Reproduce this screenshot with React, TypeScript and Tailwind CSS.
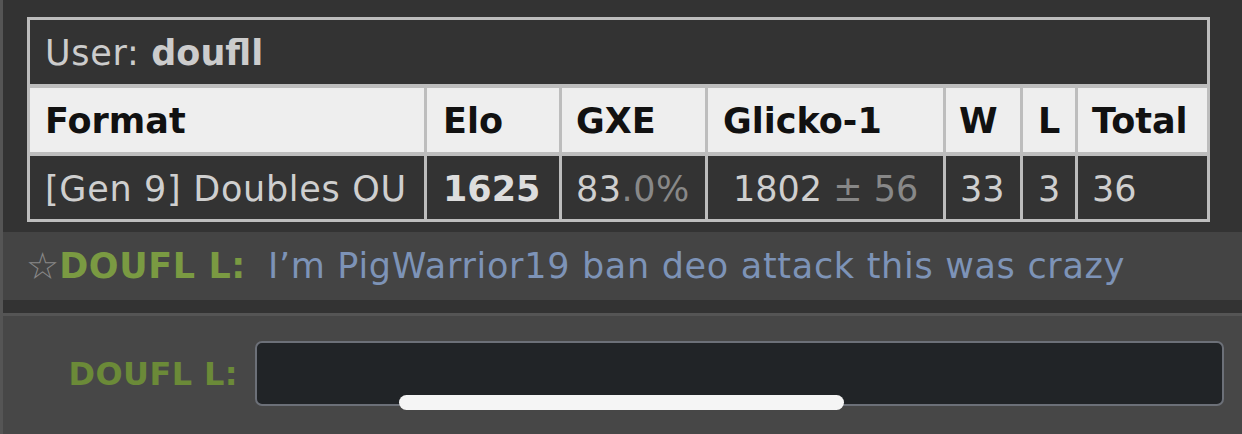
import React from "react";

const cols = "grid-cols-[394px_132px_143px_235px_74px_52px_129px]";

export default function App() {
  return (
    <div
      className="relative w-[1242px] h-[434px] overflow-hidden bg-[#333333] flex flex-col border-l-[3px] border-[#555555] text-[35px] leading-none"
      style={{ fontFamily: '"DejaVu Sans", Verdana, sans-serif' }}
    >
      {/* table */}
      <div className="pt-[17px] pl-[24px]">
        <div className={`grid ${cols} grid-rows-[64px_64px_63px] gap-x-[3px] gap-y-[4px] p-[3px] bg-[#bdbdbd] w-max`}>
          <div className="col-span-7 bg-[#333333] flex items-center pl-[15px] pt-[3px] text-[#cccccc]">
            <span className="tracking-[0.7px]">User:&nbsp;</span>
            <span className="font-bold">doufll</span>
          </div>
          {[
            ["Format", "pl-[15px]"],
            ["Elo", "pl-[16px]"],
            ["GXE", "pl-[14px]"],
            ["Glicko-1", "pl-[15px]"],
            ["W", "pl-[13px]"],
            ["L", "pl-[15px]"],
            ["Total", "pl-[14px]"],
          ].map(([t, p]) => (
            <div key={t} className={`bg-[#eeeeee] flex items-center pt-[3px] ${p} font-bold text-[#111111]`}>
              {t}
            </div>
          ))}
          <div className="bg-[#333333] flex items-center pt-[3px] pl-[15px] text-[#cfcfcf] whitespace-nowrap tracking-[0.7px]">
            [Gen 9] Doubles OU
          </div>
          <div className="bg-[#333333] flex items-center pt-[3px] pl-[16px] text-[#dddddd] font-bold">1625</div>
          <div className="bg-[#333333] flex items-center pt-[3px] pl-[14px] text-[#cfcfcf] tracking-[0.5px]">
            83<span className="text-[#888888]">.0%</span>
          </div>
          <div className="bg-[#333333] flex items-center pt-[3px] pl-[25px] text-[#cfcfcf] whitespace-nowrap">
            1802&nbsp;<span className="text-[#888888]">± 56</span>
          </div>
          <div className="bg-[#333333] flex items-center pt-[3px] pl-[14px] text-[#cfcfcf]">33</div>
          <div className="bg-[#333333] flex items-center pt-[3px] pl-[15px] text-[#cfcfcf]">3</div>
          <div className="bg-[#333333] flex items-center pt-[3px] pl-[14px] text-[#cfcfcf]">36</div>
        </div>
      </div>

      {/* chat line */}
      <div className="mt-[10px] h-[68px] bg-[#444444] flex items-center pl-[23px] whitespace-nowrap">
        <span className="text-[#888888] text-[37px]">☆</span>
        <span className="font-bold text-[#7a9a42] tracking-[0.6px]">DOUFL L:</span>
        <span className="ml-[22px] text-[#7d93b7] tracking-[0.7px]">I’m PigWarrior19 ban deo attack this was crazy</span>
      </div>

      <div className="h-[13px]" />

      {/* input area */}
      <div className="flex-1 bg-[#474747] border-t-[3px] border-[#555555] flex items-start pt-[25px]">
        <div className="w-[252px] h-[65px] flex items-center justify-end pr-[17px] font-bold text-[32px] text-[#6b8a38] tracking-[0.4px]">
          DOUFL L:
        </div>
        <div className="w-[969px] h-[65px] rounded-[7px] border-[2.5px] border-[#6c7078] bg-[#212427]" />
      </div>

      {/* home indicator */}
      <div className="absolute left-[396px] top-[395px] w-[445px] h-[15px] rounded-full bg-[#f5f5f5]" />
    </div>
  );
}
